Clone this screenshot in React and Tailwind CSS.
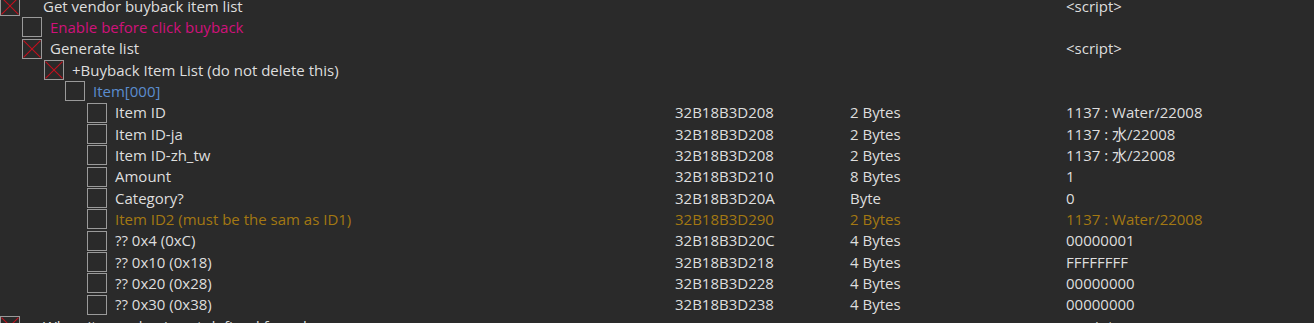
const rows = [
  { level: 0, checked: true, desc: 'Get vendor buyback item list', value: '<script>' },
  { level: 1, desc: 'Enable before click buyback', color: 'text-[#d0117b]' },
  { level: 1, checked: true, desc: 'Generate list', value: '<script>' },
  { level: 2, checked: true, desc: '+Buyback Item List (do not delete this)' },
  { level: 3, desc: 'Item[000]', color: 'text-[#5b8dcf]' },
  { level: 4, desc: 'Item ID', addr: '32B18B3D208', type: '2 Bytes', value: '1137 : Water/22008' },
  { level: 4, desc: 'Item ID-ja', addr: '32B18B3D208', type: '2 Bytes', value: '1137 : 水/22008' },
  { level: 4, desc: 'Item ID-zh_tw', addr: '32B18B3D208', type: '2 Bytes', value: '1137 : 水/22008' },
  { level: 4, desc: 'Amount', addr: '32B18B3D210', type: '8 Bytes', value: '1' },
  { level: 4, desc: 'Category?', addr: '32B18B3D20A', type: 'Byte', value: '0' },
  { level: 4, desc: 'Item ID2 (must be the sam as ID1)', addr: '32B18B3D290', type: '2 Bytes', value: '1137 : Water/22008', color: 'text-[#a37812]' },
  { level: 4, desc: '?? 0x4 (0xC)', addr: '32B18B3D20C', type: '4 Bytes', value: '00000001' },
  { level: 4, desc: '?? 0x10 (0x18)', addr: '32B18B3D218', type: '4 Bytes', value: 'FFFFFFFF' },
  { level: 4, desc: '?? 0x20 (0x28)', addr: '32B18B3D228', type: '4 Bytes', value: '00000000' },
  { level: 4, desc: '?? 0x30 (0x38)', addr: '32B18B3D238', type: '4 Bytes', value: '00000000' },
  { level: 0, checked: true, desc: 'When item value is not defined for sale', value: '<script>' },
]

const indent = ['pl-0', 'pl-[22px]', 'pl-[44px]', 'pl-[65px]', 'pl-[87px]']

function CheckBox({ checked }) {
  return (
    <div className="relative w-[20px] h-[20px] shrink-0 border-[1.5px] border-[#9a9a9a]">
      {checked && (
        <svg className="absolute inset-0 w-full h-full" viewBox="0 0 17 17">
          <line x1="0.5" y1="0.5" x2="16.5" y2="16.5" stroke="#c4101e" strokeWidth="1" />
          <line x1="16.5" y1="0.5" x2="0.5" y2="16.5" stroke="#c4101e" strokeWidth="1" />
        </svg>
      )}
    </div>
  )
}

export default function App() {
  return (
    <div
      className="w-full h-screen overflow-hidden bg-[#2a2a2a] text-[#dedede] text-[15px]"
      style={{ fontFamily: '"Open Sans", "Noto Sans CJK JP", sans-serif' }}
    >
      <div className="-mt-[5.33px]">
        {rows.map((r, i) => {
          const color = r.color || 'text-[#dedede]'
          return (
            <div key={i} className={`grid grid-cols-[675px_175px_216px_1fr] h-[21.33px] items-center whitespace-nowrap ${color}`}>
              <div className={`flex items-center ${indent[r.level]}`}>
                <CheckBox checked={r.checked} />
                <span className={r.level === 0 ? 'ml-[23px]' : 'ml-[8px]'}>{r.desc}</span>
              </div>
              <div>{r.addr}</div>
              <div>{r.type}</div>
              <div>{r.value}</div>
            </div>
          )
        })}
      </div>
    </div>
  )
}
